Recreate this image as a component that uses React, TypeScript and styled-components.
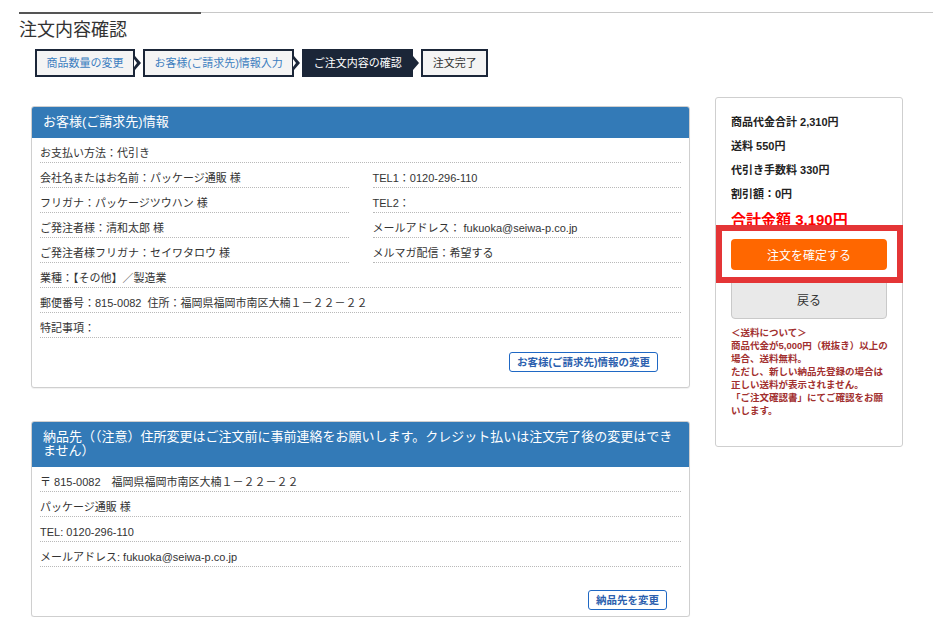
import React from "react";
import styled, { createGlobalStyle } from "styled-components";

const GlobalStyle = createGlobalStyle`
  html, body { margin: 0; padding: 0; background: #fff; }
  body {
    font-family: "Liberation Sans", "Noto Sans CJK JP", sans-serif;
    color: #333;
  }
  * { box-sizing: border-box; }
`;

const Page = styled.div`
  width: 941px;
  padding: 12px 8px 0 19px;
`;

const TopRule = styled.div`
  display: flex;
  align-items: flex-start;
  width: 914px;
`;

const RuleDark = styled.div`
  width: 182px;
  height: 2px;
  background: #555;
`;

const RuleLight = styled.div`
  flex: 1;
  height: 1px;
  background: #c8c8c8;
`;

const Title = styled.h1`
  margin: 4px 0 0;
  font-size: 18px;
  line-height: 24px;
  font-weight: normal;
  color: #333;
`;

const Steps = styled.ol`
  display: flex;
  gap: 8px;
  list-style: none;
  margin: 7px 0 0 16px;
  padding: 0;
`;

const Step = styled.li<{ $state: "done" | "current" | "todo"; $arrow?: boolean }>`
  position: relative;
  height: 28px;
  padding: 0 9.5px;
  border: 2px solid #1b2638;
  background: ${(p) => (p.$state === "current" ? "#1b2638" : "#f4f4f4")};
  color: ${(p) =>
    p.$state === "current" ? "#fff" : p.$state === "done" ? "#3b7dbf" : "#333"};
  font-size: 11px;
  line-height: 24px;
  white-space: nowrap;

  &::after {
    content: "";
    display: ${(p) => (p.$arrow ? "block" : "none")};
    position: absolute;
    top: 50%;
    right: -8px;
    transform: translateY(-50%);
    border-left: 6px solid #1b2638;
    border-top: 7px solid transparent;
    border-bottom: 7px solid transparent;
  }
  &::before {
    content: "";
    display: ${(p) => (p.$arrow && p.$state !== "current" ? "block" : "none")};
    position: absolute;
    top: 50%;
    right: -4px;
    transform: translateY(-50%);
    z-index: 1;
    border-left: 3px solid #fff;
    border-top: 4px solid transparent;
    border-bottom: 4px solid transparent;
  }
`;

const Main = styled.div`
  display: flex;
  align-items: flex-start;
  gap: 25px;
  margin: 20px 0 0 12px;
`;

const LeftCol = styled.div`
  width: 659px;
  padding-top: 9px;
  display: flex;
  flex-direction: column;
  gap: 33px;
`;

const Panel = styled.section`
  border: 1px solid #cfcfcf;
  border-radius: 3px;
  box-shadow: 0 1px 1px rgba(0, 0, 0, 0.06);
  background: #fff;
  overflow: hidden;
`;

const PanelHead = styled.h2`
  margin: 0;
  padding: 8px 11px 9px;
  background: #337ab7;
  color: #fff;
  font-size: 13px;
  line-height: 14px;
  font-weight: normal;
`;

const PanelBody = styled.div`
  padding: 0 8px;
`;

const Row = styled.div`
  padding: 8px 0 2px;
  font-size: 11px;
  line-height: 14px;
  color: #333;
  border-bottom: 1px dotted #b9b9b9;
  white-space: nowrap;
`;

const TwoCols = styled.div`
  display: grid;
  grid-template-columns: 1fr 1fr;
  column-gap: 24px;
`;

const Actions = styled.div<{ $top: number; $bottom: number; $right: number }>`
  display: flex;
  justify-content: flex-end;
  padding: ${(p) => `${p.$top}px ${p.$right}px ${p.$bottom}px 0`};
`;

const OutlineButton = styled.button`
  height: 20px;
  padding: 0 7px;
  border: 1px solid #1f68c4;
  border-radius: 3px;
  background: #fff;
  color: #2c5fae;
  font-family: inherit;
  font-size: 10.5px;
  font-weight: bold;
  line-height: 18px;
  cursor: pointer;
`;

const Side = styled.aside`
  width: 188px;
  padding: 17px 15px 29px;
  border: 1px solid #cfcfcf;
  border-radius: 3px;
  background: #fff;
`;

const SumLine = styled.p`
  margin: 0 0 10px;
  font-size: 11px;
  line-height: 14px;
  font-weight: bold;
  color: #222;
`;

const Total = styled.p`
  margin: 0;
  font-size: 15px;
  line-height: 18px;
  font-weight: bold;
  color: #ff0000;
`;

const ConfirmWrap = styled.div`
  position: relative;
  margin-top: 10px;
`;

const ConfirmButton = styled.button`
  display: block;
  width: 100%;
  height: 31px;
  border: none;
  border-radius: 4px;
  background: #ff6700;
  color: #fff;
  font-family: inherit;
  font-size: 12px;
  cursor: pointer;
`;

const Highlight = styled.span`
  position: absolute;
  top: -14px;
  left: -15px;
  right: -16px;
  bottom: -13px;
  border: 6px solid #e43536;
  z-index: 2;
  pointer-events: none;
`;

const BackButton = styled.button`
  display: block;
  width: 100%;
  height: 40px;
  margin-top: 9px;
  border: 1px solid #c9c9c9;
  border-radius: 4px;
  background: #e9e9e9;
  color: #333;
  font-family: inherit;
  font-size: 12px;
  cursor: pointer;
`;

const Note = styled.p`
  margin: 7px 0 0;
  font-size: 9.5px;
  line-height: 13px;
  font-weight: bold;
  color: #a2302f;
  white-space: nowrap;
`;

export default function App() {
  return (
    <>
      <GlobalStyle />
      <Page>
        <TopRule>
          <RuleDark />
          <RuleLight />
        </TopRule>
        <Title>注文内容確認</Title>
        <Steps>
          <Step $state="done" $arrow>商品数量の変更</Step>
          <Step $state="done" $arrow>お客様(ご請求先)情報入力</Step>
          <Step $state="current" $arrow>ご注文内容の確認</Step>
          <Step $state="todo">注文完了</Step>
        </Steps>
        <Main>
          <LeftCol>
            <Panel>
              <PanelHead>お客様(ご請求先)情報</PanelHead>
              <PanelBody>
                <Row>お支払い方法：代引き</Row>
                <TwoCols>
                  <Row>会社名またはお名前：パッケージ通販 様</Row>
                  <Row>TEL1：0120-296-110</Row>
                  <Row>フリガナ：パッケージツウハン 様</Row>
                  <Row>TEL2：</Row>
                  <Row>ご発注者様：清和太郎 様</Row>
                  <Row>メールアドレス： fukuoka@seiwa-p.co.jp</Row>
                  <Row>ご発注者様フリガナ：セイワタロウ 様</Row>
                  <Row>メルマガ配信：希望する</Row>
                </TwoCols>
                <Row>業種：【その他】／製造業</Row>
                <Row>郵便番号：815-0082&nbsp;&nbsp;住所：福岡県福岡市南区大楠１－２２－２２</Row>
                <Row>特記事項：</Row>
                <Actions $top={14} $bottom={15} $right={23}>
                  <OutlineButton>お客様(ご請求先)情報の変更</OutlineButton>
                </Actions>
              </PanelBody>
            </Panel>
            <Panel>
              <PanelHead>
                納品先（（注意）住所変更はご注文前に事前連絡をお願いします。クレジット払いは注文完了後の変更はできません）
              </PanelHead>
              <PanelBody>
                <Row>〒 815-0082　福岡県福岡市南区大楠１－２２－２２</Row>
                <Row>パッケージ通販 様</Row>
                <Row>TEL: 0120-296-110</Row>
                <Row>メールアドレス: fukuoka@seiwa-p.co.jp</Row>
                <Actions $top={23} $bottom={6} $right={14}>
                  <OutlineButton>納品先を変更</OutlineButton>
                </Actions>
              </PanelBody>
            </Panel>
          </LeftCol>
          <Side>
            <SumLine>商品代金合計 2,310円</SumLine>
            <SumLine>送料 550円</SumLine>
            <SumLine>代引き手数料 330円</SumLine>
            <SumLine>割引額：0円</SumLine>
            <Total>合計金額 3,190円</Total>
            <ConfirmWrap>
              <ConfirmButton>注文を確定する</ConfirmButton>
              <Highlight />
            </ConfirmWrap>
            <BackButton>戻る</BackButton>
            <Note>
              ＜送料について＞
              <br />
              商品代金が5,000円（税抜き）以上の
              <br />
              場合、送料無料。
              <br />
              ただし、新しい納品先登録の場合は
              <br />
              正しい送料が表示されません。
              <br />
              「ご注文確認書」にてご確認をお願
              <br />
              いします。
            </Note>
          </Side>
        </Main>
      </Page>
    </>
  );
}
